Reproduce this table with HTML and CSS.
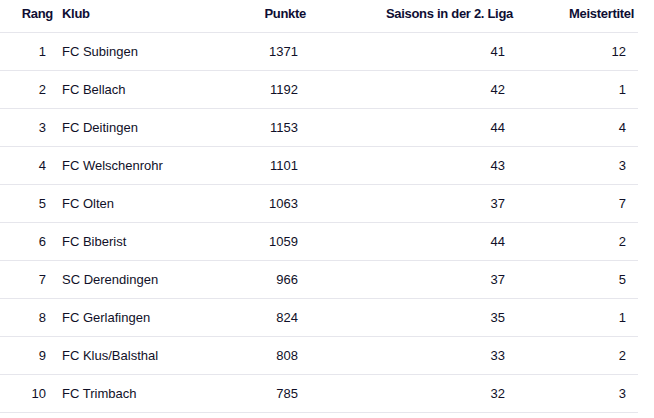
FILE: index.html
```html
<!DOCTYPE html>
<html lang="de">
<head>
<meta charset="utf-8">
<link rel="stylesheet" href="styles.css">
</head>
<body>
<table class="standings">
  <colgroup>
    <col class="c-rang"><col class="c-klub"><col class="c-punkte"><col class="c-saisons"><col class="c-titel">
  </colgroup>
  <thead>
    <tr>
      <th class="num rang">Rang</th>
      <th class="txt">Klub</th>
      <th class="num">Punkte</th>
      <th class="num">Saisons in der 2. Liga</th>
      <th class="num">Meistertitel</th>
    </tr>
  </thead>
  <tbody>
    <tr><td class="num rang">1</td><td class="txt">FC Subingen</td><td class="num">1371</td><td class="num">41</td><td class="num">12</td></tr>
    <tr><td class="num rang">2</td><td class="txt">FC Bellach</td><td class="num">1192</td><td class="num">42</td><td class="num">1</td></tr>
    <tr><td class="num rang">3</td><td class="txt">FC Deitingen</td><td class="num">1153</td><td class="num">44</td><td class="num">4</td></tr>
    <tr><td class="num rang">4</td><td class="txt">FC Welschenrohr</td><td class="num">1101</td><td class="num">43</td><td class="num">3</td></tr>
    <tr><td class="num rang">5</td><td class="txt">FC Olten</td><td class="num">1063</td><td class="num">37</td><td class="num">7</td></tr>
    <tr><td class="num rang">6</td><td class="txt">FC Biberist</td><td class="num">1059</td><td class="num">44</td><td class="num">2</td></tr>
    <tr><td class="num rang">7</td><td class="txt">SC Derendingen</td><td class="num">966</td><td class="num">37</td><td class="num">5</td></tr>
    <tr><td class="num rang">8</td><td class="txt">FC Gerlafingen</td><td class="num">824</td><td class="num">35</td><td class="num">1</td></tr>
    <tr><td class="num rang">9</td><td class="txt">FC Klus/Balsthal</td><td class="num">808</td><td class="num">33</td><td class="num">2</td></tr>
    <tr><td class="num rang">10</td><td class="txt">FC Trimbach</td><td class="num">785</td><td class="num">32</td><td class="num">3</td></tr>
  </tbody>
</table>
</body>
</html>
```
FILE: styles.css
```css
html, body {
  margin: 0;
  padding: 0;
  background: #ffffff;
}
body {
  font-family: "Liberation Sans", Arial, sans-serif;
  font-size: 13px;
  color: #14142b;
}
.standings {
  border-collapse: collapse;
  table-layout: fixed;
  width: 638px;
}
.c-rang { width: 57px; }
.c-klub { width: 198px; }
.c-punkte { width: 55px; }
.c-saisons { width: 207px; }
.c-titel { width: 121px; }

.standings th {
  font-weight: 700;
  color: #0e0e33;
  letter-spacing: -0.3px;
  height: 32px;
  line-height: 16px;
  padding: 6px 4px 10px 5px;
  box-sizing: border-box;
  border-bottom: 1px solid #e6e6ec;
  white-space: nowrap;
}
.standings td {
  height: 37px;
  line-height: 16px;
  padding: 0 12px 0 5px;
  border-bottom: 1px solid #e6e6ec;
  white-space: nowrap;
  color: #101028;
}
.standings .txt { text-align: left; }
.standings .num { text-align: right; }
.standings td.rang { padding-right: 11px; }
.standings th.rang { padding-right: 4px; }
```
